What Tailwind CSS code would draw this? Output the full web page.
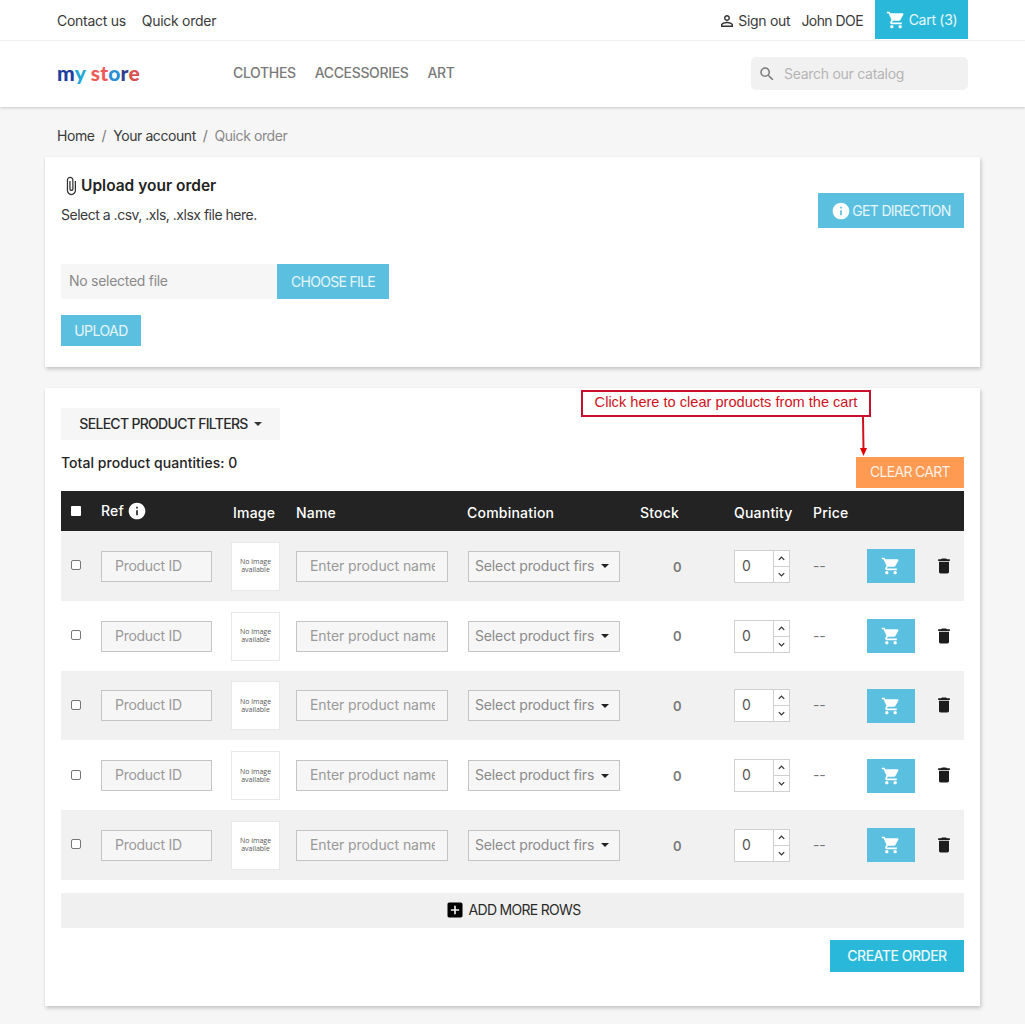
<!DOCTYPE html>
<html lang="en">
  <head>
    <meta charset="UTF-8" />
    <meta name="viewport" content="width=device-width, initial-scale=1.0" />
    <title>Quick order</title>
    <script src="https://cdn.jsdelivr.net/npm/@tailwindcss/browser@4"></script>
  </head>
  <body class="bg-[#f6f6f6] min-h-screen font-['Inter',sans-serif] text-[14px] text-[#232323] tracking-[-0.02em]">
    <!-- Header -->
    <header class="bg-white shadow-[0_1px_3px_rgba(0,0,0,0.2)]">
      <div class="h-[41px] border-b border-[#f1f1f1] flex items-start justify-between pl-[57px] pr-[57px]">
        <div class="flex gap-[16px] pt-[10px] text-[#3a3a3a]">
          <a>Contact us</a>
          <a>Quick order</a>
        </div>
        <div class="flex items-start">
          <svg class="w-[18px] h-[18px] mt-[12px] mr-[2px] fill-[#333]" viewBox="0 0 24 24"><path d="M12 5.9a2.1 2.1 0 110 4.2 2.1 2.1 0 010-4.2m0 9c2.97 0 6.1 1.46 6.1 2.1v1.1H5.9V17c0-.64 3.13-2.1 6.1-2.1M12 4C9.79 4 8 5.79 8 8s1.79 4 4 4 4-1.79 4-4-1.79-4-4-4zm0 9c-2.67 0-8 1.34-8 4v3h16v-3c0-2.66-5.33-4-8-4z"/></svg>
          <span class="pt-[10px] text-[#3a3a3a]">Sign out</span>
          <span class="pt-[10px] ml-[11px] mr-[12px] text-[#3a3a3a] tracking-[-0.04em]">John DOE</span>
          <div class="w-[93px] h-[39px] bg-[#29b8da] flex items-center justify-center gap-[3px] text-white/90">
            <svg class="w-[20px] h-[20px] fill-white" viewBox="0 0 24 24"><path d="M7 18c-1.1 0-1.99.9-1.99 2S5.9 22 7 22s2-.9 2-2-.9-2-2-2zM1 2v2h2l3.6 7.59-1.35 2.45c-.16.28-.25.61-.25.96 0 1.1.9 2 2 2h12v-2H7.42c-.14 0-.25-.11-.25-.25l.03-.12.9-1.63h7.45c.75 0 1.41-.41 1.75-1.03l3.58-6.49c.08-.14.12-.31.12-.48 0-.55-.45-1-1-1H5.21l-.94-2H1zm16 16c-1.1 0-1.99.9-1.99 2s.89 2 1.99 2 2-.9 2-2-.9-2-2-2z"/></svg>
            <span>Cart (3)</span>
          </div>
        </div>
      </div>
      <div class="h-[66px] flex items-center pl-[57px] pr-[57px]">
        <div class="w-[176px] -mt-[3px] font-['Lato',sans-serif] font-black text-[21px] tracking-[0.01em] leading-none">
          <span class="text-[#1d3f9e]">m</span><span class="text-[#1fa9d8]">y</span>
          <span class="text-[#ef5b5b]">st</span><span class="text-[#2b8fd6]">o</span><span class="text-[#33408f]">r</span><span class="text-[#d9534f]">e</span>
        </div>
        <nav class="flex gap-[19px] -mt-[3px] font-medium text-[#7a7a7a] tracking-[-0.025em]">
          <a>CLOTHES</a>
          <a>ACCESSORIES</a>
          <a>ART</a>
        </nav>
        <div class="ml-auto -mt-[1px] w-[217px] h-[33px] bg-[#f1f1f1] rounded-[5px] flex items-center pl-[7px] gap-[8px] text-[#b5b5b5]">
          <svg class="w-[18px] h-[18px] fill-[#7a7a7a]" viewBox="0 0 24 24"><path d="M15.5 14h-.79l-.28-.27C15.41 12.59 16 11.11 16 9.5 16 5.91 13.09 3 9.5 3S3 5.91 3 9.5 5.91 16 9.5 16c1.61 0 3.09-.59 4.23-1.57l.27.28v.79l5 4.99L20.49 19l-4.99-5zm-6 0C7.01 14 5 11.99 5 9.5S7.01 5 9.5 5 14 7.01 14 9.5 11.99 14 9.5 14z"/></svg>
          <span>Search our catalog</span>
        </div>
      </div>
    </header>

    <!-- Breadcrumb -->
    <div class="h-[50px] pl-[57px] flex items-center gap-[7px] pt-[7px] tracking-[-0.03em]">
      <span class="text-[#3a3a3a]">Home</span>
      <span class="text-[#777]">/</span>
      <span class="text-[#3a3a3a]">Your account</span>
      <span class="text-[#777]">/</span>
      <span class="text-[#8a8a8a]">Quick order</span>
    </div>

    <main class="mx-[45px] flex flex-col gap-[21px] pb-[18px]">
      <!-- Upload card -->
      <section class="bg-white h-[210px] p-[16px] shadow-[1px_2px_4px_rgba(0,0,0,0.22)] flex justify-between items-start">
        <div>
          <h2 class="flex items-center text-[15.5px] font-semibold leading-[20px] mt-[3px] tracking-normal">
            <svg class="w-[20px] h-[20px] fill-[#333]" viewBox="0 0 24 24"><path d="M16.5 6v11.5c0 2.21-1.79 4-4 4s-4-1.79-4-4V5c0-1.38 1.12-2.5 2.5-2.5s2.5 1.12 2.5 2.5v10.5c0 .55-.45 1-1 1s-1-.45-1-1V6H10v9.5c0 1.38 1.12 2.5 2.5 2.5s2.5-1.12 2.5-2.5V5c0-2.21-1.79-4-4-4S7 2.79 7 5v12.5c0 3.04 2.46 5.5 5.5 5.5s5.5-2.46 5.5-5.5V6h-1.5z"/></svg>
            Upload your order
          </h2>
          <p class="mt-[9px] leading-[20px] text-[#3a3a3a] tracking-[-0.035em]">Select a .csv, .xls, .xlsx file here.</p>
          <div class="mt-[39px] flex h-[35px]">
            <div class="w-[216px] bg-[#f6f6f6] text-[#8a8a8a] pl-[8px] pb-[2px] flex items-center">No selected file</div>
            <div class="w-[112px] bg-[#5bbfdf] text-white/85 flex items-center justify-center tracking-[-0.05em]">CHOOSE FILE</div>
          </div>
          <div class="mt-[16px] w-[80px] h-[31px] bg-[#5bbfdf] text-white/85 flex items-center justify-center tracking-[-0.04em]">UPLOAD</div>
        </div>
        <div class="mt-[20px] w-[146px] h-[35px] bg-[#5bbfdf] text-white/85 flex items-center justify-center gap-[1px] tracking-[-0.05em]">
          <svg class="w-[20px] h-[20px] fill-white" viewBox="0 0 24 24"><path d="M12 2C6.48 2 2 6.48 2 12s4.48 10 10 10 10-4.48 10-10S17.52 2 12 2zm1 15h-2v-6h2v6zm0-8h-2V7h2v2z"/></svg>
          GET DIRECTION
        </div>
      </section>

      <!-- Quick order card -->
      <section class="relative bg-white h-[618px] px-[16px] pt-[20px] shadow-[1px_2px_4px_rgba(0,0,0,0.22)]">
        <!-- Annotation over the page -->
        <div class="absolute left-[536px] top-[2px] w-[290px] h-[27px] border-2 border-[#c8102e] bg-white flex items-center justify-center pb-[2px] font-['Liberation_Sans',sans-serif] text-[14.6px] tracking-normal text-[#d0121b]">Click here to clear products from the cart</div>
        <svg class="absolute left-[812px] top-[29px]" width="12" height="40" viewBox="0 0 12 40"><path d="M6 0 L6.5 33" stroke="#d0121b" stroke-width="2" fill="none"/><path d="M3 31 L10 31 L6.5 39 Z" fill="#e00000"/></svg>

        <div class="w-[219px] h-[32px] bg-[#f6f6f6] flex items-center justify-center gap-[6px] pb-[1px] text-[#2a2a2a] font-medium tracking-[-0.05em]">
          SELECT PRODUCT FILTERS
          <span class="w-0 h-0 border-x-[4px] border-x-transparent border-t-[4px] border-t-[#333]"></span>
        </div>
        <div class="flex justify-between items-start">
          <div class="mt-[12px] font-medium tracking-[0.003em] text-[#232323]">Total product quantities: 0</div>
          <div class="mt-[17px] w-[108px] h-[31px] bg-[#ff9a52] text-white/85 flex items-center justify-center pb-[3px] tracking-[-0.05em]">CLEAR CART</div>
        </div>

        <!-- Table -->
        <div class="mt-[3px] h-[40px] pt-[3px] bg-[#232323] text-white font-medium tracking-[0.015em] flex items-center">
          <div class="w-[40px] pl-[10px] -mt-[3px]"><span class="block w-[10px] h-[10px] bg-white rounded-[1px]"></span></div>
          <div class="w-[130px] flex items-center gap-[3px] -mt-[4px]">Ref
            <svg class="w-[20px] h-[20px] fill-white" viewBox="0 0 24 24"><path d="M12 2C6.48 2 2 6.48 2 12s4.48 10 10 10 10-4.48 10-10S17.52 2 12 2zm1 15h-2v-6h2v6zm0-8h-2V7h2v2z"/></svg>
          </div>
          <div class="w-[65px] pl-[2px]">Image</div>
          <div class="w-[171px]">Name</div>
          <div class="w-[173px]">Combination</div>
          <div class="w-[94px]">Stock</div>
          <div class="w-[79px]">Quantity</div>
          <div>Price</div>
        </div>
        <div id="rows"></div>

        <div class="mt-[13px] h-[35px] bg-[#f0f0f0] flex items-center justify-center gap-[4px] pb-[1px] text-[#2a2a2a] tracking-[-0.05em]">
          <svg class="w-[20px] h-[20px] fill-black" viewBox="0 0 24 24"><path d="M19 3H5c-1.11 0-2 .9-2 2v14c0 1.1.89 2 2 2h14c1.1 0 2-.9 2-2V5c0-1.1-.9-2-2-2zm-2 10h-4v4h-2v-4H7v-2h4V7h2v4h4v2z"/></svg>
          ADD MORE ROWS
        </div>
        <div class="flex justify-end mt-[12px]">
          <div class="w-[134px] h-[32px] bg-[#29b8da] text-white/90 font-medium flex items-center justify-center tracking-[-0.035em]">CREATE ORDER</div>
        </div>
      </section>
    </main>

    <script>
      // five empty order rows, every other one shaded
      const rowsEl = document.getElementById("rows");
      for (let i = 0; i < 5; i++) {
        const row = document.createElement("div");
        row.className =
          "h-[69.75px] pt-[1px] flex items-center " + (i % 2 === 0 ? "bg-[#f1f1f1]" : "bg-white");
        row.innerHTML = `
          <div class="w-[40px] pl-[10px] -mt-[2px]"><span class="block w-[10px] h-[10px] bg-white border border-[#767676] rounded-[2px]"></span></div>
          <div class="w-[130px]"><input placeholder="Product ID" class="w-[111px] h-[31px] border border-[#c4c4c4] bg-[#f6f6f6] pl-[13px] pb-[2px] placeholder:text-[#9a9a9a] outline-none" /></div>
          <div class="w-[65px]">
            <div class="w-[49px] h-[49px] bg-white border border-[#e8e8e8] flex items-center justify-center text-center font-['Open_Sans',sans-serif] text-[7px] leading-[8px] tracking-normal text-[#555]">No image<br />available</div>
          </div>
          <div class="w-[171px]"><input placeholder="Enter product name" class="w-[152px] h-[31px] border border-[#c4c4c4] bg-[#f6f6f6] pl-[13px] pr-[12px] pb-[2px] tracking-[-0.005em] placeholder:text-[#9a9a9a] outline-none" /></div>
          <div class="w-[173px]">
            <div class="ml-[1px] w-[152px] h-[31px] border border-[#c4c4c4] bg-[#f6f6f6] pl-[6px] pb-[2px] flex items-center text-[#8a8a8a]">
              <span class="w-[118px] whitespace-nowrap tracking-[-0.01em]">Select product firs</span>
              <span class="ml-[8px] mt-[2px] w-0 h-0 border-x-[4px] border-x-transparent border-t-[4px] border-t-[#222]"></span>
            </div>
          </div>
          <div class="w-[94px] pl-[33px] mt-[2px] text-[13px] font-semibold text-[#7a7a7a]">0</div>
          <div class="w-[79px]">
            <div class="w-[56px] h-[33px] bg-white border border-[#d0d0d0] flex">
              <div class="w-[38px] pl-[7px] pb-[2px] flex items-center text-[#555]">0</div>
              <div class="flex-1 flex flex-col border-l border-[#d0d0d0]">
                <div class="flex-1 flex items-center justify-center border-b border-[#d0d0d0]">
                  <svg class="w-[9px] h-[9px]" viewBox="0 0 10 10"><path d="M2 6.5 L5 3.5 L8 6.5" fill="none" stroke="#333" stroke-width="1.4"/></svg>
                </div>
                <div class="flex-1 flex items-center justify-center">
                  <svg class="w-[9px] h-[9px]" viewBox="0 0 10 10"><path d="M2 3.5 L5 6.5 L8 3.5" fill="none" stroke="#333" stroke-width="1.4"/></svg>
                </div>
              </div>
            </div>
          </div>
          <div class="w-[54px] pb-[2px] text-[#777]">--</div>
          <div class="w-[48px] h-[34px] bg-[#5bbfdf] flex items-center justify-center">
            <svg class="w-[20px] h-[20px] fill-white" viewBox="0 0 24 24"><path d="M7 18c-1.1 0-1.99.9-1.99 2S5.9 22 7 22s2-.9 2-2-.9-2-2-2zM1 2v2h2l3.6 7.59-1.35 2.45c-.16.28-.25.61-.25.96 0 1.1.9 2 2 2h12v-2H7.42c-.14 0-.25-.11-.25-.25l.03-.12.9-1.63h7.45c.75 0 1.41-.41 1.75-1.03l3.58-6.49c.08-.14.12-.31.12-.48 0-.55-.45-1-1-1H5.21l-.94-2H1zm16 16c-1.1 0-1.99.9-1.99 2s.89 2 1.99 2 2-.9 2-2-.9-2-2-2z"/></svg>
          </div>
          <svg class="ml-[19px] -mt-[1px] w-[20px] h-[20px] fill-[#1c1c1c]" viewBox="0 0 24 24"><path d="M6 19c0 1.1.9 2 2 2h8c1.1 0 2-.9 2-2V7H6v12zM19 4h-3.5l-1-1h-5l-1 1H5v2h14V4z"/></svg>
        `;
        rowsEl.appendChild(row);
      }
    </script>
  </body>
</html>
